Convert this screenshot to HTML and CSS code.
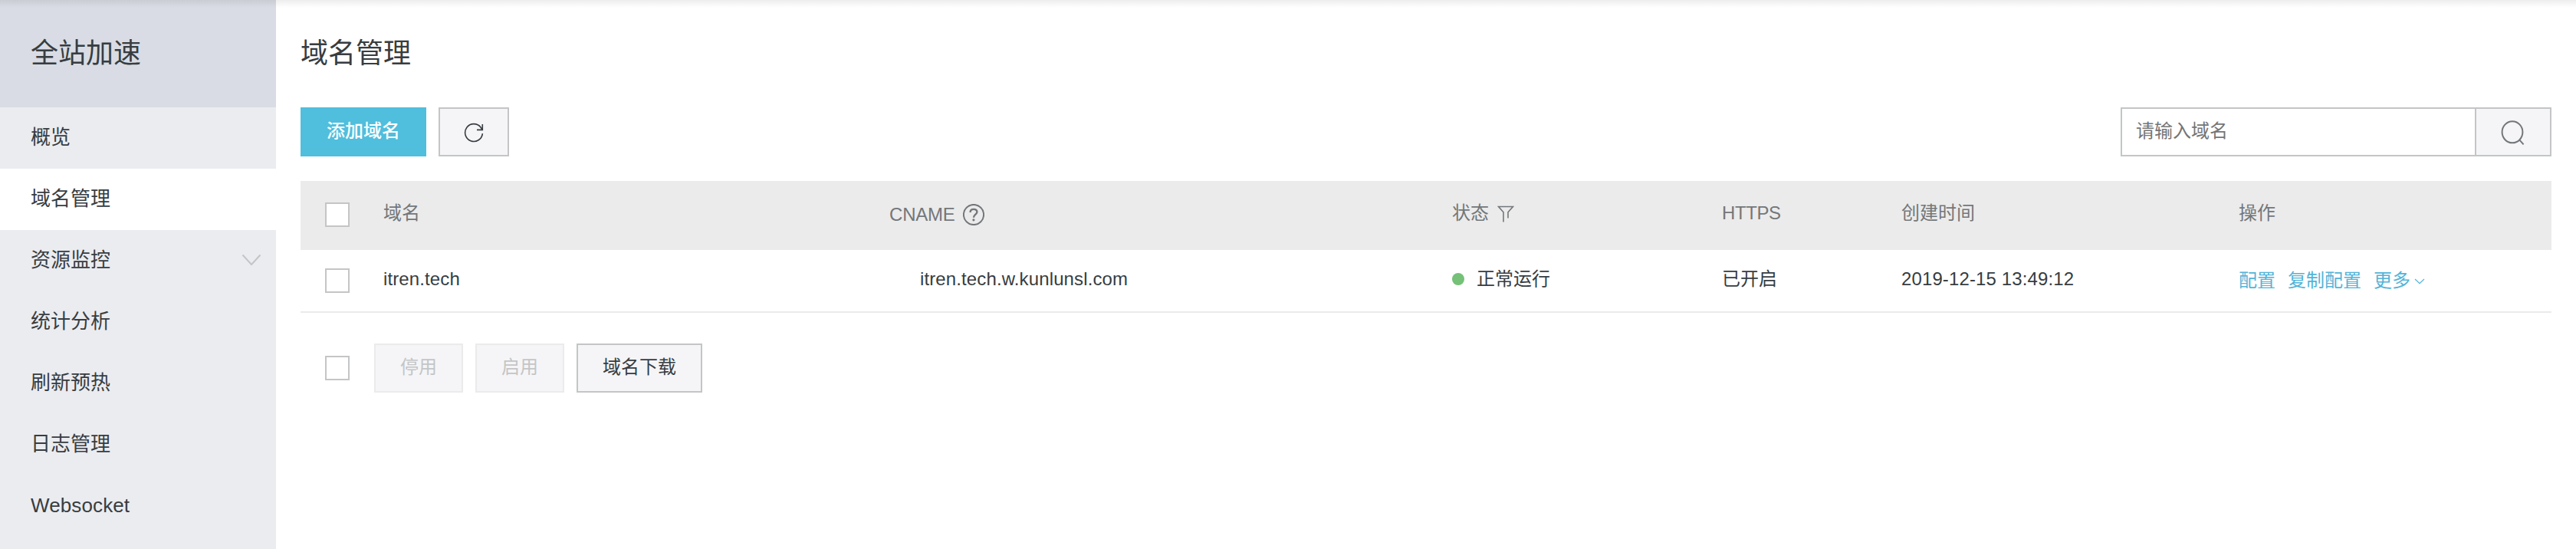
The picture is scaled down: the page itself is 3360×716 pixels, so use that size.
FILE: index.html
```html
<!DOCTYPE html>
<html lang="zh-CN">
<head>
<meta charset="utf-8">
<title>域名管理</title>
<link rel="stylesheet" href="styles.css">
</head>
<body>
<div class="layout">
  <aside class="sidebar">
    <h2 class="sidebar-title">全站加速</h2>
    <nav class="menu">
      <a class="menu-item">概览</a>
      <a class="menu-item active">域名管理</a>
      <a class="menu-item">资源监控<svg class="menu-arrow" width="26" height="16" viewBox="0 0 26 16"><path d="M1.5 1.5 13 14 24.5 1.5"/></svg></a>
      <a class="menu-item">统计分析</a>
      <a class="menu-item">刷新预热</a>
      <a class="menu-item">日志管理</a>
      <a class="menu-item latin">Websocket</a>
    </nav>
  </aside>
  <main class="main">
    <h1 class="page-title">域名管理</h1>
    <div class="toolbar">
      <button class="btn primary">添加域名</button>
      <button class="btn icon-btn"><svg width="26" height="26" viewBox="0 0 26 26"><path d="M24.4 14.2A11.4 11.4 0 1 1 22 6L24 9.2M24.3 2V9.4H17"/></svg></button>
      <div class="search">
        <input class="search-input" type="text" placeholder="请输入域名">
        <button class="search-btn"><svg width="32" height="38" viewBox="0 0 32 38"><ellipse cx="15" cy="19.3" rx="13.4" ry="14"/><path d="M24.4 29.6 29.6 35.4"/></svg></button>
      </div>
    </div>
    <div class="table">
      <div class="row head">
        <span class="check"></span>
        <span class="cell">域名</span>
        <span class="cell cname-head">CNAME<svg class="help" width="28" height="28" viewBox="0 0 28 28"><circle cx="14" cy="14" r="13.1"/><path class="hook" d="M9.6 10.9C9.6 8.2 11.4 6.9 14 6.9S18.4 8.3 18.4 10.6C18.4 13.6 14 13.7 14 17.7"/><circle class="point" cx="13.9" cy="20.8" r="1.6"/></svg></span>
        <span class="cell status-head">状态<svg class="filter" width="22" height="22" viewBox="0 0 22 22"><path d="M8 21.5V8.8L1.6 1.5H20.4L14 8.8V16.5"/></svg></span>
        <span class="cell https-head">HTTPS</span>
        <span class="cell">创建时间</span>
        <span class="cell">操作</span>
      </div>
      <div class="row body">
        <span class="check"></span>
        <span class="cell latin">itren.tech</span>
        <span class="cell latin cname">itren.tech.w.kunlunsl.com</span>
        <span class="cell status"><i class="dot"></i>正常运行</span>
        <span class="cell">已开启</span>
        <span class="cell latin">2019-12-15 13:49:12</span>
        <span class="cell actions"><a>配置</a><a>复制配置</a><a>更多<svg class="more" width="14" height="8" viewBox="0 0 14 8"><path d="M1 1 7 6.6 13 1"/></svg></a></span>
      </div>
    </div>
    <div class="footer">
      <span class="check"></span>
      <button class="btn disabled">停用</button>
      <button class="btn disabled">启用</button>
      <button class="btn">域名下载</button>
    </div>
  </main>
</div>
</body>
</html>
```
FILE: styles.css
```css
* { box-sizing: border-box; }

body {
  margin: 0;
  background: #fff;
  color: #373d41;
  font: 24px/36px "Liberation Sans", "Noto Sans CJK SC", sans-serif;
  overflow: hidden;
}

.layout {
  display: flex;
  height: 716px;
}

.layout::before {
  content: "";
  position: absolute;
  top: 0;
  left: 0;
  width: 100%;
  height: 10px;
  background: linear-gradient(rgba(0, 0, 0, .07), rgba(0, 0, 0, 0));
}

svg { fill: none; stroke: currentColor; stroke-width: 2; flex: none; }

.sidebar { width: 360px; background: #ebecf0; }

.sidebar-title {
  margin: 0;
  height: 140px;
  padding: 40px 40px 0;
  background: #d9dce4;
  font-size: 36px;
  font-weight: 400;
  line-height: 60px;
}

.menu-item {
  display: flex;
  justify-content: space-between;
  height: 80px;
  padding: 19px 18px 0 40px;
  font-size: 26px;
  line-height: 40px;
}

.menu-item.active { background: #fff; }
.menu-arrow { margin: 12px 1px 0 0; color: #c3c5c6; }
.latin { letter-spacing: .12px; }

.main { flex: 1; padding: 0 32px; }

.page-title {
  margin: 0;
  height: 140px;
  padding-top: 40px;
  font-size: 36px;
  font-weight: 400;
  line-height: 60px;
}

.toolbar { display: flex; gap: 16px; }

.btn {
  height: 64px;
  padding: 0 32px 2px;
  border: 2px solid #c3c5c6;
  background: #f5f5f7;
  color: #373d41;
  font: inherit;
}

.btn.primary {
  width: 164px;
  padding: 0 0 2px;
  border-color: #50bedd;
  background: #50bedd;
  color: #fff;
  font-weight: 500;
}

.btn.disabled { border-color: #ebebeb; color: #c3c5c6; }

.btn.icon-btn {
  display: flex;
  justify-content: center;
  align-items: center;
  width: 92px;
  padding: 2px 0 0;
}

.icon-btn svg { stroke-width: 1.6; }

.search {
  display: flex;
  width: 562px;
  height: 64px;
  margin-left: auto;
  border: 2px solid #c3c5c6;
}

.search-input {
  flex: 1;
  min-width: 0;
  padding: 0 18px 2px;
  border: 0;
  font: inherit;
}

.search-input::placeholder { color: #757575; }

.search-btn {
  display: flex;
  justify-content: center;
  align-items: center;
  width: 98px;
  padding: 0;
  border: 0;
  border-left: 2px solid #c3c5c6;
  background: #f5f5f7;
  color: #73777a;
}

.table { margin-top: 32px; }

.row {
  display: grid;
  grid-template-columns: 76px 660px 734px 352px 234px 440px 1fr;
  align-items: start;
  padding-left: 32px;
}

.head {
  height: 90px;
  padding-top: 28px;
  background: #ebebeb;
  color: #73777a;
}

.body {
  height: 82px;
  padding-top: 24px;
  border-bottom: 2px solid #ebebeb;
}

.check {
  width: 32px;
  height: 32px;
  border: 2px solid #c3c5c6;
  background: #fff;
}

.cell { display: flex; margin-top: -4px; }

.cname-head { margin-top: -2px; letter-spacing: -.2px; }
.https-head { letter-spacing: -.4px; }
.help { margin: 4px 0 0 10px; }
.help .hook { stroke-width: 2.4; }
.help .point { fill: currentColor; stroke: none; }
.filter { margin: 8px 0 0 11px; stroke-width: 1.6; }
.cname { padding-left: 40px; }

.dot {
  width: 16px;
  height: 16px;
  margin: 10px 16px 0 0;
  border-radius: 50%;
  background: #74c177;
}

.actions { gap: 16px; margin-top: -2px; color: #53b4d8; }
.actions a { display: flex; }
.more { margin: 15px 0 0 5px; stroke-width: 1.2; }

.footer {
  display: flex;
  align-items: center;
  gap: 16px;
  margin-top: 40px;
  padding-left: 32px;
}

.footer .check { margin-right: 16px; }
.footer .disabled { width: 116px; }
.footer .btn:last-child { width: 164px; }
```
